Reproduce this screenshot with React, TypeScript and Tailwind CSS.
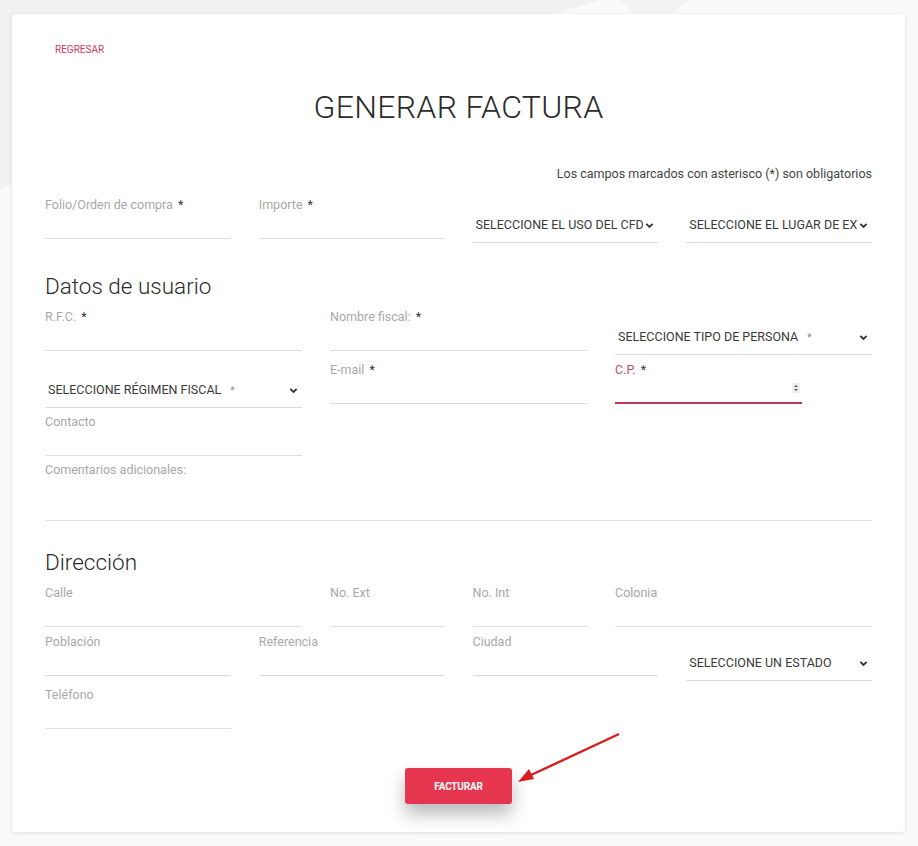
import type { ReactNode } from "react";

const font = { fontFamily: "Roboto, 'Liberation Sans', sans-serif" };

function Chevron() {
  return (
    <svg viewBox="0 0 10 10" className="w-[9px] h-[9px] shrink-0" xmlns="http://www.w3.org/2000/svg">
      <path d="M1.5 3.2 L5 6.6 L8.5 3.2" fill="none" stroke="#333" strokeWidth="2" />
    </svg>
  );
}

function TextField({ label, star, className = "" }: { label: string; star?: boolean; className?: string }) {
  return (
    <div className={className}>
      <div className="h-4 text-[12.5px] leading-4 text-[#a8a8a8]">
        {label}
        {star && <span className="text-[#333] ml-[5px]">*</span>}
      </div>
      <div className="h-[26px] border-b border-[#dedede]" />
    </div>
  );
}

function SelectField({
  text,
  star,
  className = "",
  spread,
}: {
  text: string;
  star?: boolean;
  className?: string;
  spread?: boolean;
}) {
  return (
    <div className={`h-[35px] border-b border-[#dcdcdc] flex items-center pl-[3px] pr-[4px] ${className}`}>
      <div className="flex-1 overflow-hidden whitespace-nowrap text-[12.5px] text-[#3a3a3a]">
        {text}
        {star && <span className="text-[#888] ml-[9px] text-[10px]">*</span>}
      </div>
      <div className={spread ? "ml-2" : "ml-[2px]"}>
        <Chevron />
      </div>
    </div>
  );
}

function Heading({ children, className = "" }: { children: ReactNode; className?: string }) {
  return <div className={`text-[22.5px] leading-7 font-light text-[#2b2b2b] ${className}`}>{children}</div>;
}

export default function App() {
  return (
    <div className="relative min-h-[846px] w-[918px] bg-[#fafafa] overflow-hidden" style={font}>
      <svg className="absolute left-0 top-0" width="918" height="846" xmlns="http://www.w3.org/2000/svg">
        <polygon points="0,0 600,0 40,170 0,190" fill="#f1f1f1" />
        <polygon points="620,0 690,0 650,30" fill="#f3f3f3" />
      </svg>

      <div className="relative ml-[12px] mt-[14px] w-[893px] h-[818px] bg-white rounded-[4px] shadow-[0_1px_4px_rgba(0,0,0,0.12)] px-[33px] pt-[30px]">
        <div className="text-[10px] leading-3 text-[#cc3a5e] ml-[10px]">REGRESAR</div>

        <div className="mt-[33px] text-center text-[32px] leading-9 font-light text-[#2b2b2b] tracking-[0.3px]">
          GENERAR FACTURA
        </div>

        <div className="mt-[41px] text-right text-[12.5px] leading-4 text-[#444]">
          Los campos marcados con asterisco (*) son obligatorios
        </div>

        {/* fila 1 */}
        <div className="mt-[15px] grid grid-cols-12 gap-x-[28px] items-start">
          <TextField className="col-span-3" label="Folio/Orden de compra" star />
          <TextField className="col-span-3" label="Importe" star />
          <SelectField className="col-span-3 mt-[11px]" text="SELECCIONE EL USO DEL CFDI" />
          <SelectField className="col-span-3 mt-[11px]" text="SELECCIONE EL LUGAR DE EXPEDICIÓN" />
        </div>

        <Heading className="mt-[29px]">Datos de usuario</Heading>

        <div className="mt-[9px] grid grid-cols-12 gap-x-[28px] items-start">
          <div className="col-span-4 flex flex-col">
            <TextField label="R.F.C." star />
            <SelectField className="mt-[22px]" text="SELECCIONE RÉGIMEN FISCAL" star spread />
            <TextField className="mt-[6px]" label="Contacto" />
          </div>
          <div className="col-span-4 flex flex-col">
            <TextField label="Nombre fiscal:" star />
            <TextField className="mt-[11px]" label="E-mail" star />
          </div>
          <div className="col-span-4 flex flex-col">
            <SelectField className="mt-[11px]" text="SELECCIONE TIPO DE PERSONA" star spread />
            <div className="mt-[7px] w-[187px]">
              <div className="h-4 text-[12.5px] leading-4 text-[#c0506a]">
                C.P.<span className="text-[#333] ml-[5px]">*</span>
              </div>
              <div className="h-[26px] border-b-2 border-[#c03a58] flex items-center justify-end pr-[2px]">
                <svg viewBox="0 0 8 10" className="w-[8px] h-[10px] mb-[4px]" xmlns="http://www.w3.org/2000/svg">
                  <rect x="0" y="0" width="8" height="10" fill="#efefef" />
                  <path d="M2 4 L4 2 L6 4 Z M2 6 L4 8 L6 6 Z" fill="#555" />
                </svg>
              </div>
            </div>
          </div>
        </div>

        <div className="mt-[6px]">
          <div className="h-4 text-[12.5px] leading-4 text-[#a8a8a8]">Comentarios adicionales:</div>
          <div className="h-[43px] border-b border-[#dedede]" />
        </div>

        <Heading className="mt-[27px]">Dirección</Heading>

        <div className="mt-[9px] grid grid-cols-12 gap-x-[28px] items-start">
          <TextField className="col-span-4" label="Calle" />
          <TextField className="col-span-2" label="No. Ext" />
          <TextField className="col-span-2" label="No. Int" />
          <TextField className="col-span-4" label="Colonia" />
        </div>

        <div className="mt-[7px] grid grid-cols-12 gap-x-[28px] items-start">
          <TextField className="col-span-3" label="Población" />
          <TextField className="col-span-3" label="Referencia" />
          <TextField className="col-span-3" label="Ciudad" />
          <SelectField className="col-span-3 mt-[12px]" text="SELECCIONE UN ESTADO" spread />
        </div>

        <div className="mt-[6px] grid grid-cols-12 gap-x-[28px] items-start">
          <TextField className="col-span-3" label="Teléfono" />
        </div>

        <div className="mt-[39px] flex justify-center">
          <div className="relative">
            <button className="w-[107px] h-[36px] rounded-[3px] bg-[#e5354f] text-white text-[10px] font-bold tracking-[-0.2px] shadow-[0_10px_18px_rgba(0,0,0,0.28)]">
              FACTURAR
            </button>
            <svg
              className="absolute left-[110px] top-[-36px] overflow-visible"
              width="110"
              height="52"
              xmlns="http://www.w3.org/2000/svg"
            >
              <line x1="104" y1="2" x2="14" y2="44" stroke="#d81e1e" strokeWidth="2.4" />
              <polygon points="3,50 14,37 19,47" fill="#d81e1e" />
            </svg>
          </div>
        </div>
      </div>
    </div>
  );
}
